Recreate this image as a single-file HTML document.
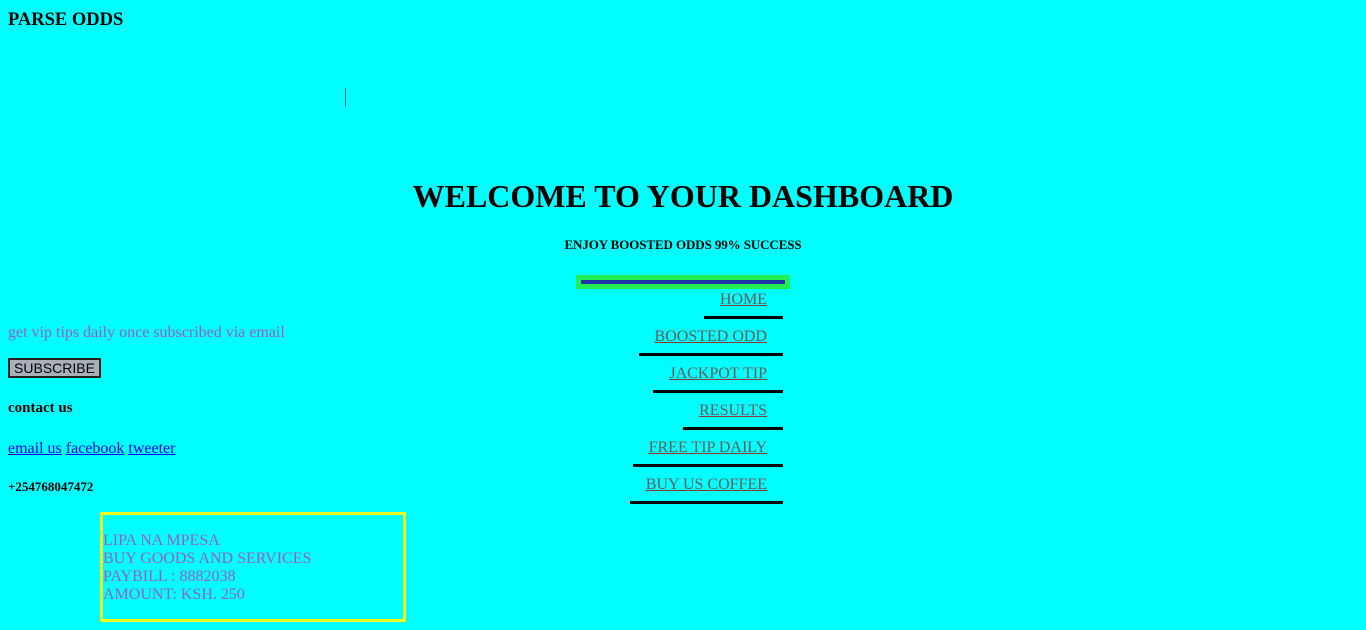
<!DOCTYPE html>
<html><head><style>
body{margin:0;background:#00ffff;font-family:"Liberation Serif",serif;width:1366px;height:630px;overflow:hidden;position:relative}
.a{position:absolute;white-space:nowrap}
.nav{position:absolute;right:599px;font-size:16px;color:#6b5a5a;text-decoration:underline;text-decoration-color:#8b3a3a}
.bar{position:absolute;height:3px;background:#000;right:583px}
</style></head><body>
<div class="a" style="left:8px;top:10px;font-size:18.5px;font-weight:bold">PARSE ODDS</div>
<div class="a" style="left:345px;top:88px;width:1px;height:19px;background:#4a6a6a"></div>
<div class="a" style="left:0;width:1366px;text-align:center;top:178px;font-size:32px;font-weight:bold">WELCOME TO YOUR DASHBOARD</div>
<div class="a" style="left:0;width:1366px;text-align:center;top:237px;font-size:13px;font-weight:bold;letter-spacing:-0.1px">ENJOY BOOSTED ODDS 99% SUCCESS</div>
<div class="a" style="left:576px;top:275px;width:214px;height:14px;background:#22ee55"></div>
<div class="a" style="left:581px;top:280px;width:204px;height:4px;background:#2233aa"></div>
<div class="nav" style="top:291px">HOME</div><div class="bar" style="top:316px;width:79px"></div>
<div class="nav" style="top:328px">BOOSTED ODD</div><div class="bar" style="top:353px;width:144px"></div>
<div class="nav" style="top:365px">JACKPOT TIP</div><div class="bar" style="top:390px;width:130px"></div>
<div class="nav" style="top:402px">RESULTS</div><div class="bar" style="top:427px;width:100px"></div>
<div class="nav" style="top:439px">FREE TIP DAILY</div><div class="bar" style="top:464px;width:150px"></div>
<div class="nav" style="top:476px">BUY US COFFEE</div><div class="bar" style="top:501px;width:153px"></div>
<div class="a" style="left:8px;top:324px;font-size:16px;color:#9a5fb5">get vip tips daily once subscribed via email</div>
<div class="a" style="left:8px;top:358px;width:89px;height:16px;border:2px solid #222;background:#aab0b8;font-family:'Liberation Sans',sans-serif;font-size:14px;text-align:center;line-height:16px">SUBSCRIBE</div>
<div class="a" style="left:8px;top:400px;font-size:15px;font-weight:bold">contact us</div>
<div class="a" style="left:8px;top:440px;font-size:16px;color:#0000ee"><u>email us</u> <u>facebook</u> <u>tweeter</u></div>
<div class="a" style="left:8px;top:479px;font-size:13px;font-weight:bold">+254768047472</div>
<div class="a" style="left:100px;top:512px;width:300px;height:104px;border:3px solid #eeff22"></div>
<div class="a" style="left:103px;top:532px;font-size:16px;line-height:18px;color:#9a5fb5">LIPA NA MPESA<br>BUY GOODS AND SERVICES<br>PAYBILL : 8882038<br>AMOUNT: KSH. 250</div>
</body></html>
